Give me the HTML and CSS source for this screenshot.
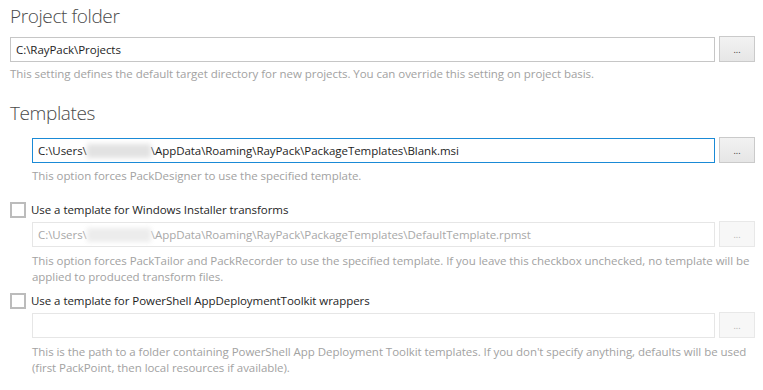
FILE: index.html
```html
<!DOCTYPE html>
<html>
<head>
<meta charset="utf-8">
<link rel="stylesheet" href="styles.css">
</head>
<body>
<div class="page">
  <h2 class="heading h1">Project folder</h2>
  <div class="field-row r1">
    <div class="input">C:\RayPack\Projects</div>
    <div class="btn">...</div>
  </div>
  <p class="desc d1">This setting defines the default target directory for new projects. You can override this setting on project basis.</p>

  <h2 class="heading h2">Templates</h2>
  <div class="indent">
    <div class="field-row r2">
      <div class="input focused">C:\Users\<span class="blur"></span>\AppData\Roaming\RayPack\PackageTemplates\Blank.msi</div>
      <div class="btn">...</div>
    </div>
    <p class="desc d2">This option forces PackDesigner to use the specified template.</p>
  </div>

  <label class="check c1"><span class="box"></span><span class="label">Use a template for Windows Installer transforms</span></label>
  <div class="indent">
    <div class="field-row r3">
      <div class="input disabled">C:\Users\<span class="blur light"></span>\AppData\Roaming\RayPack\PackageTemplates\DefaultTemplate.rpmst</div>
      <div class="btn disabled">...</div>
    </div>
    <p class="desc d3">This option forces PackTailor and PackRecorder to use the specified template. If you leave this checkbox unchecked, no template will be<br>applied to produced transform files.</p>
  </div>

  <label class="check c2"><span class="box"></span><span class="label">Use a template for PowerShell AppDeploymentToolkit wrappers</span></label>
  <div class="indent">
    <div class="field-row r4">
      <div class="input disabled"></div>
      <div class="btn disabled">...</div>
    </div>
    <p class="desc d4">This is the path to a folder containing PowerShell App Deployment Toolkit templates. If you don't specify anything, defaults will be used<br>(first PackPoint, then local resources if available).</p>
  </div>
</div>
</body>
</html>
```

FILE: styles.css
```css
html, body {
  margin: 0;
  padding: 0;
  background: #ffffff;
}
body {
  font-family: "Open Sans", "Noto Sans", "Liberation Sans", sans-serif;
  font-size: 11.5px;
  letter-spacing: -0.05px;
  color: #1e1e1e;
}
.page {
  padding: 2px 8px 0 10px;
  width: 745px;
}
.heading {
  margin: 0;
  font-weight: 300;
  font-size: 19px;
  letter-spacing: -0.4px;
  line-height: 28px;
  color: #4a4a4a;
}
.h2 { margin-top: 17px; }
.field-row {
  display: flex;
  gap: 4px;
  height: 25px;
}
.r1 { margin-top: 7px; }
.r2 { margin-top: 11px; }
.r3, .r4 { margin-top: 4px; }
.input {
  flex: 1;
  box-sizing: border-box;
  height: 25px;
  border: 1px solid #c6c6c6;
  padding: 0 5px;
  line-height: 23px;
  white-space: nowrap;
  overflow: hidden;
  color: #1e1e1e;
}
.input.focused { border-color: #1a8ad6; }
.input.disabled { border-color: #e6e6e6; color: #a8a8a8; }
.btn {
  width: 36px;
  box-sizing: border-box;
  height: 26px;
  margin-top: -1px;
  border: 1px solid #cacaca;
  background: linear-gradient(#f2f2f2, #e6e6e6);
  text-align: center;
  font-size: 9px;
  line-height: 26px;
  color: #333;
}
.btn.disabled {
  border-color: #e8e8e8;
  background: #f7f7f7;
  color: #b0b0b0;
}
.blur {
  display: inline-block;
  width: 64px;
  height: 14px;
  vertical-align: -3px;
  background: #e2e2e2;
  filter: blur(2.5px);
}
.blur.light { background: #ececec; }
.desc {
  margin: 0;
  line-height: 16px;
  white-space: nowrap;
  color: #a2a2a2;
}
.d1 { margin-top: 4px; }
.d2 { margin-top: 5px; }
.d3, .d4 { margin-top: 6px; }
.indent { padding-left: 22px; }
.check {
  display: flex;
  align-items: center;
  gap: 5px;
  height: 16px;
}
.c1 { margin-top: 18px; }
.c2 { margin-top: 8px; }
.box {
  box-sizing: border-box;
  width: 16px;
  height: 16px;
  border: 2px solid #bcbcbc;
  background: #fff;
}
.label {
  line-height: 16px;
  color: #1e1e1e;
}
```
